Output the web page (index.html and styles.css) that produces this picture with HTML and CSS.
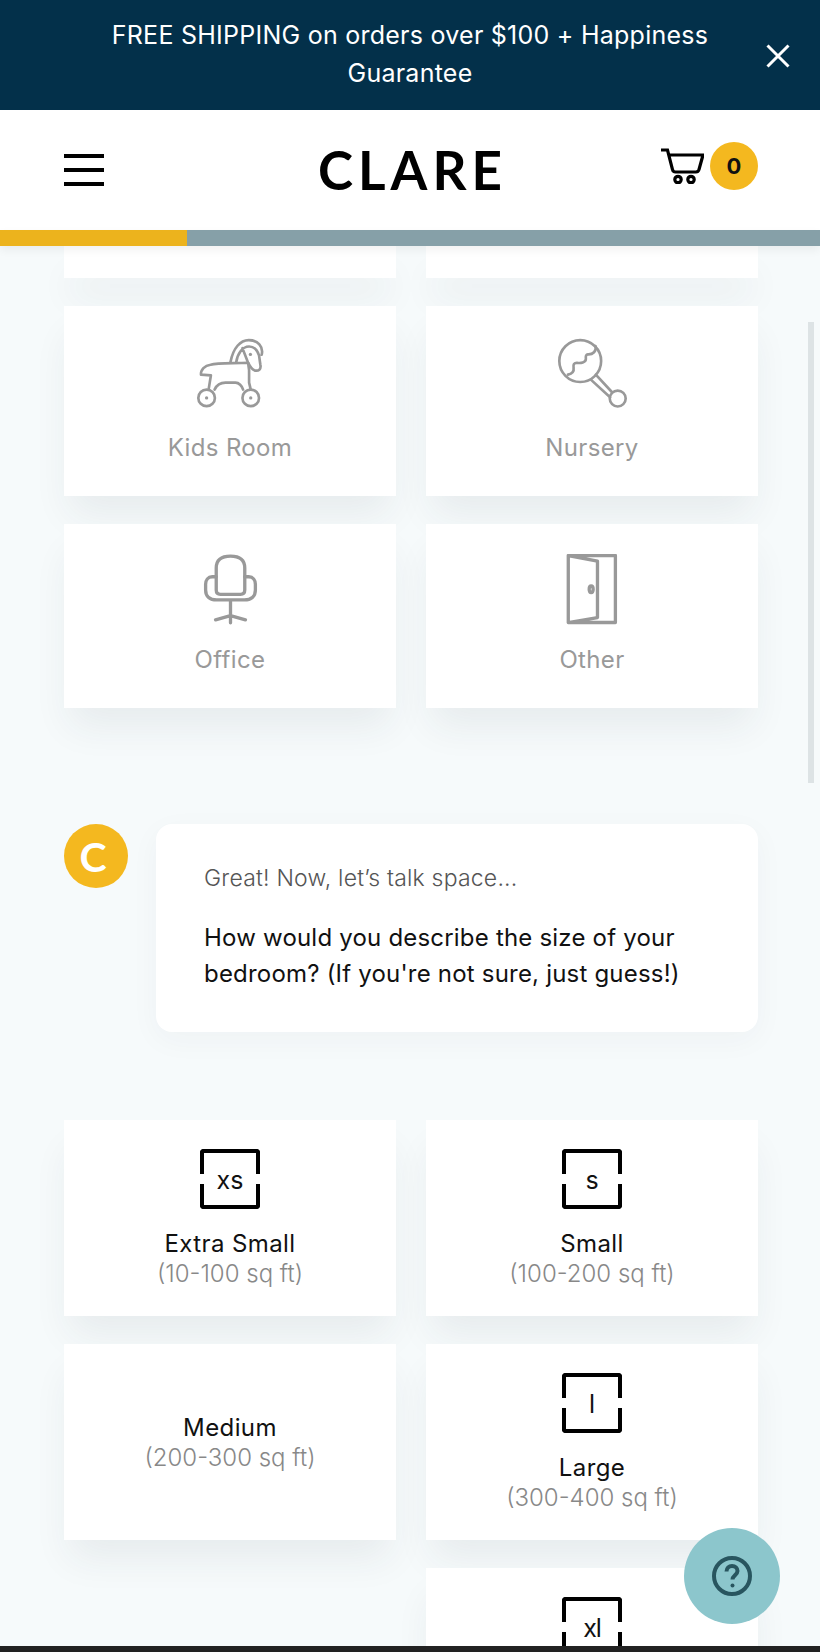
FILE: index.html
```html
<!DOCTYPE html>
<html lang="en">
<head>
<meta charset="utf-8">
<title>Clare</title>
<link rel="stylesheet" href="styles.css">
</head>
<body>
<div class="page">
  <div class="promo">
    <p class="promo-text">FREE SHIPPING on orders over $100 + Happiness Guarantee</p>
    <svg class="promo-close" viewBox="0 0 24 24"><path d="M1.5 1.5 22.5 22.5M22.5 1.5 1.5 22.5"/></svg>
  </div>
  <header class="site-header">
    <div class="burger"><span></span><span></span><span></span></div>
    <div class="logo">CLARE</div>
    <div class="cart">
      <svg class="cart-icon" viewBox="0 0 44 36"><path d="M1 2H7.5L12.5 21.5C12.8 23 13.8 24 15.5 24H36C37.5 24 38.5 23 39 21.5L43 7H9"/><circle cx="18" cy="31.500" r="3.200"/><circle cx="31" cy="31.500" r="3.200"/></svg>
      <div class="cart-badge">0</div>
    </div>
  </header>
  <div class="progress"><div class="progress-fill" style="width:187px"></div></div>
  <main class="content">
    <div class="grid">
      <div class="card card-cut"></div>
      <div class="card card-cut"></div>
      <div class="card card-room">
        <svg class="room-icon" viewBox="400 110 220 225"><circle cx="438" cy="296" r="25"/><circle cx="571" cy="296" r="25"/><circle class="dot" cx="438" cy="296" r="5"/><circle class="dot" cx="571" cy="296" r="5"/><path d="M444 271 451 228 421 226C420 212 432 198 450 196C470 190 510 192 563 190L566 212 566 250 571 271M462 271C468 258 478 250 495 250H525C535 250 545 260 548 271"/><path d="M510 188C518 145 540 122 565 122C592 122 610 142 604 166M527 190C530 165 545 141 566 141C578 141 590 150 596 168L600 196C603 210 595 216 582 213C574 210 568 200 563 190L546 146"/><circle class="dot" cx="570" cy="165" r="5"/></svg>
        <div class="room-label">Kids Room</div>
      </div>
      <div class="card card-room">
        <svg class="room-icon" viewBox="407 110 220 225"><circle cx="480" cy="185" r="63"/><circle cx="593" cy="298" r="24"/><path d="M526 140C530 155 518 166 503 165C498 165 496 170 497 178C498 190 480 192 470 190C462 190 458 196 460 205C462 218 452 224 443 226M527 226 576 279M512 241 570 294"/></svg>
        <div class="room-label">Nursery</div>
      </div>
      <div class="card card-room card-short">
        <svg class="room-icon icon-thick" viewBox="400 104 220 225"><path d="M467 146C467 122 482 110 510 110C538 110 553 122 553 146V212C553 220 548 225 540 225H480C472 225 467 220 467 212Z"/><path d="M467 172H455C442 172 435 182 435 195V212C435 232 448 242 468 242H552C572 242 585 232 585 212V195C585 182 578 172 565 172H553M510 242V311M465 302 510 289 555 302"/></svg>
        <div class="room-label">Office</div>
      </div>
      <div class="card card-room card-short">
        <svg class="room-icon icon-thick" viewBox="408 104 220 225"><path d="M445 108H587V310H445ZM445 108 533 125V295L445 310"/><ellipse cx="514" cy="210" rx="6" ry="10"/></svg>
        <div class="room-label">Other</div>
      </div>
    </div>

    <section class="chat">
      <div class="avatar">C</div>
      <div class="bubble">
        <p class="bubble-intro">Great! Now, let’s talk space...</p>
        <p class="bubble-question">How would you describe the size of your bedroom? (If you're not sure, just guess!)</p>
      </div>
    </section>

    <div class="grid">
      <div class="card card-size">
        <div class="frame">xs</div>
        <div class="size-name">Extra Small</div>
        <div class="size-range">(10-100 sq ft)</div>
      </div>
      <div class="card card-size">
        <div class="frame">s</div>
        <div class="size-name">Small</div>
        <div class="size-range">(100-200 sq ft)</div>
      </div>
      <div class="card card-size card-plain">
        <div class="size-name">Medium</div>
        <div class="size-range">(200-300 sq ft)</div>
      </div>
      <div class="card card-size">
        <div class="frame">l</div>
        <div class="size-name">Large</div>
        <div class="size-range">(300-400 sq ft)</div>
      </div>
      <div class="grid-spacer"></div>
      <div class="card card-size">
        <div class="frame frame-tight">xl</div>
      </div>
    </div>
  </main>
  <div class="footer-strip"></div>
  <div class="scrollbar"></div>
  <button class="help" type="button">
    <svg viewBox="0 0 40 40"><circle cx="20" cy="20" r="18"/><path d="M14.500 15.500C14.500 12 17 10 20 10C23.300 10 25.500 12 25.500 15C25.500 19 20.500 19.500 20.500 23.500"/><circle class="help-dot" cx="20.500" cy="29.500" r="2"/></svg>
  </button>
</div>
</body>
</html>
```
FILE: styles.css
```css
* { box-sizing: border-box; }
html, body { margin: 0; height: 100%; overflow: hidden; }
body { font-family: Inter, "Noto Sans", sans-serif; color: #111; background: #f6fafb; }
p { margin: 0; }

.page { position: relative; height: 1652px; display: flex; flex-direction: column; overflow: hidden; }

.promo { flex: none; height: 110px; background: #03304a; color: #fff; position: relative; padding: 16px 96px 0 96px; }
.promo-text { font-size: 25px; line-height: 38px; letter-spacing: .25px; text-align: center; }
.promo-close { position: absolute; left: 766px; top: 44px; width: 24px; height: 24px; fill: none; stroke: #fff; stroke-width: 3; }

.site-header { flex: none; height: 120px; background: #fff; display: grid; grid-template-columns: 1fr auto 1fr; align-items: center; padding: 0 62px 0 64px; }
.burger { width: 40px; display: flex; flex-direction: column; gap: 10px; }
.burger span { display: block; height: 4px; background: #000; }
.logo { font-family: Lato, sans-serif; font-weight: 700; font-size: 53px; letter-spacing: 5px; line-height: 1; color: #000; margin: -2px 0 0 3px; }
.cart { justify-self: end; display: flex; align-items: center; gap: 6px; margin-top: -9px; }
.cart-icon { width: 44px; height: 36px; fill: none; stroke: #000; stroke-width: 3.2; }
.cart-badge { width: 48px; height: 48px; border-radius: 50%; background: #f4b81f; display: flex; align-items: center; justify-content: center; font-weight: 700; font-size: 22px; color: #111; }

.progress { flex: none; height: 16px; background: #86a0a8; box-shadow: 0 4px 10px rgba(0, 0, 0, .06); position: relative; z-index: 2; }
.progress-fill { height: 100%; background: #ecb31d; }

.content { flex: 1; min-height: 0; overflow: hidden; padding: 0 62px 0 64px; }
.grid { display: grid; grid-template-columns: 332px 332px; column-gap: 30px; row-gap: 28px; }
.grid-spacer { height: 1px; }

.card { background: #fff; box-shadow: 0 24px 36px -6px rgba(40, 60, 70, .075); display: flex; flex-direction: column; align-items: center; justify-content: center; }
.card-cut { height: 32px; }
.card-room { height: 190px; justify-content: flex-start; padding-top: 30px; }
.card-short { height: 184px; }
.room-icon { width: 73px; height: 75px; fill: none; stroke: #999; stroke-width: 8; stroke-linecap: round; stroke-linejoin: round; }
.room-icon .dot { fill: #999; stroke: none; }
.icon-thick { stroke-width: 10; }
.room-label { font-size: 24px; line-height: 30px; color: #999; margin-top: 22px; letter-spacing: .35px; }
.card-short .room-label { margin-top: 16px; }

.chat { display: flex; gap: 28px; margin-top: 116px; margin-bottom: 88px; }
.avatar { flex: none; width: 64px; height: 64px; border-radius: 50%; background: #f4b81f; color: #fff; font-family: Lato, sans-serif; font-weight: 700; font-size: 41px; padding-right: 6px; display: flex; align-items: center; justify-content: center; }
.bubble { flex: 1; height: 208px; background: #fff; border-radius: 16px; padding: 36px 48px 0; box-shadow: 0 8px 30px rgba(40, 60, 70, .04); }
.bubble-intro { font-size: 23px; line-height: 36px; letter-spacing: .2px; color: #555; font-weight: 300; margin-bottom: 24px; }
.bubble-question { font-size: 24px; line-height: 36px; letter-spacing: .2px; color: #111; }

.card-size { height: 196px; justify-content: flex-start; padding-top: 29px; }
.card-plain { justify-content: center; padding-top: 2px; }
.frame { position: relative; width: 60px; height: 60px; display: flex; align-items: center; justify-content: center; padding-top: 2px; font-size: 25px; line-height: 1; color: #111; margin-bottom: 20px; }
.frame::before, .frame::after { content: ""; position: absolute; left: 0; right: 0; height: 21px; border: 4px solid #000; }
.frame::before { top: 0; border-bottom: 0; border-radius: 4px 4px 0 0; }
.frame::after { bottom: 0; border-top: 0; border-radius: 0 0 4px 4px; }
.frame-tight { letter-spacing: -1px; }
.size-name { font-size: 24px; line-height: 30px; letter-spacing: .4px; color: #111; }
.size-range { font-size: 24px; line-height: 30px; color: #888; font-weight: 300; }

.footer-strip { flex: none; height: 6px; background: #222; }
.scrollbar { position: absolute; left: 808px; top: 322px; width: 6px; height: 461px; background: #dde3e5; }
.help { position: absolute; left: 684px; top: 1528px; width: 96px; height: 96px; border: 0; border-radius: 50%; background: #8cc6cc; padding: 28px; }
.help svg { display: block; width: 40px; height: 40px; fill: none; stroke: #28555f; stroke-width: 4; }
.help .help-dot { fill: #28555f; stroke: none; }
```
